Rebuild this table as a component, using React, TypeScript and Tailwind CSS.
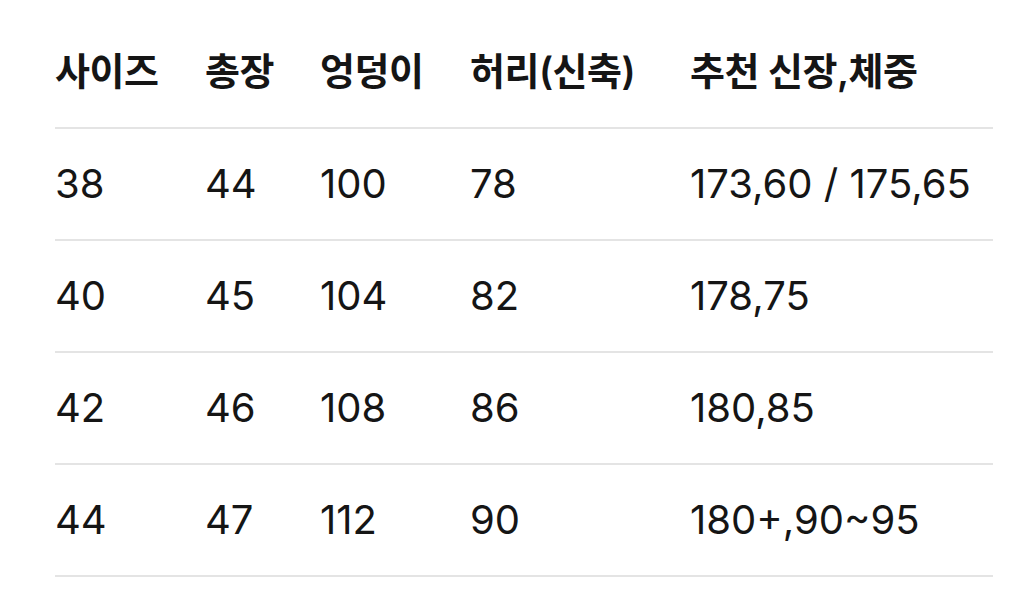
const header = ['사이즈', '총장', '엉덩이', '허리(신축)', '추천 신장,체중']

const rows = [
    ['38', '44', '100', '78', '173,60 / 175,65'],
    ['40', '45', '104', '82', '178,75'],
    ['42', '46', '108', '86', '180,85'],
    ['44', '47', '112', '90', '180+,90~95'],
]

const cols = ['w-[150px]', 'w-[115px]', 'w-[150px]', 'w-[220px]', 'flex-1']

export default function App() {
    return (
        <div className="w-[1024px] h-[612px] bg-white overflow-hidden pt-[16px] pl-[55px] pr-[31px]"
            style={{ fontFamily: 'Inter, "Noto Sans CJK KR", sans-serif' }}>
            {/* Header */}
            <div className="flex items-center h-[113px] border-b-2 border-[#e4e4e4] text-[38px] font-semibold text-[#151515] tracking-[-0.5px]">
                {header.map((h, i) => (
                    <div key={h} className={cols[i]}>{h}</div>
                ))}
            </div>

            {/* Rows */}
            {rows.map((r) => (
                <div key={r[0]} className="flex items-center h-[112px] border-b-2 border-[#e4e4e4] text-[40px] text-[#151515]">
                    {r.map((c, i) => (
                        <div key={i} className={cols[i]}>{c}</div>
                    ))}
                </div>
            ))}
        </div>
    )
}
